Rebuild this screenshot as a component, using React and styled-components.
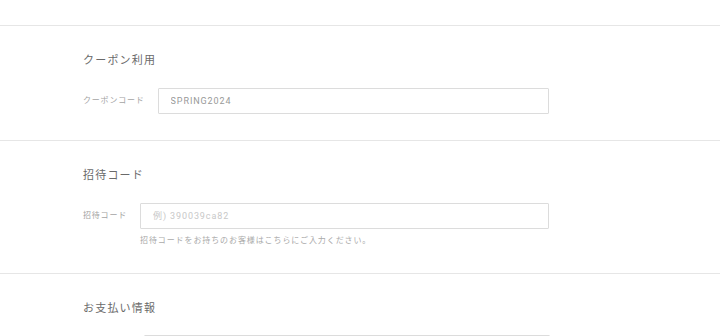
import React from "react";
import styled, { createGlobalStyle } from "styled-components";

const GlobalStyle = createGlobalStyle`
  html, body {
    margin: 0;
    padding: 0;
    background: #fff;
    font-family: Roboto, "Noto Sans CJK JP", sans-serif;
    overflow: hidden;
  }
`;

const Page = styled.div`
  padding-top: 25px;
  width: 720px;
`;

const Section = styled.section`
  border-top: 1px solid #e6e6e6;
  padding: 28px 0 26px 83px;
`;

const Title = styled.h2`
  margin: 0 0 ${(p) => (p.$tight ? 19 : 20)}px;
  font-size: 11px;
  line-height: 14px;
  font-weight: 400;
  letter-spacing: 1.2px;
  color: #6a6a6a;
`;

const Row = styled.div`
  display: flex;
  align-items: ${(p) => (p.$top ? "flex-start" : "center")};
  gap: 13px;
`;

const Label = styled.label`
  min-width: ${(p) => p.$min || 0}px;
  font-size: 8px;
  line-height: 26px;
  letter-spacing: 0.8px;
  color: #a4a4a4;
  white-space: nowrap;
`;

const Field = styled.div`
  display: flex;
  flex-direction: column;
  gap: 6px;
`;

const Input = styled.input`
  box-sizing: border-box;
  width: ${(p) => p.$width}px;
  height: 26px;
  border: 1px solid #dcdcdc;
  border-radius: 1px;
  padding: 0 12px;
  font-family: Roboto, "Noto Sans CJK JP", sans-serif;
  font-size: 9px;
  letter-spacing: 0.9px;
  color: #999;
  background: #fff;
  outline: none;

  &::placeholder {
    color: #c8c8c8;
  }
`;

const Help = styled.p`
  margin: 0;
  font-size: 8px;
  line-height: 12px;
  letter-spacing: 0.9px;
  color: #aaa;
`;

export default function App() {
  return (
    <>
      <GlobalStyle />
      <Page>
        <Section>
          <Title>クーポン利用</Title>
          <Row>
            <Label>クーポンコード</Label>
            <Input $width={391} defaultValue="SPRING2024" />
          </Row>
        </Section>
        <Section>
          <Title>招待コード</Title>
          <Row $top>
            <Label>招待コード</Label>
            <Field>
              <Input $width={409} placeholder="例) 390039ca82" />
              <Help>招待コードをお持ちのお客様はこちらにご入力ください。</Help>
            </Field>
          </Row>
        </Section>
        <Section>
          <Title $tight>お支払い情報</Title>
          <Row>
            <Label $min={48} />
            <Input $width={406} aria-label="カード番号" />
          </Row>
        </Section>
      </Page>
    </>
  );
}
